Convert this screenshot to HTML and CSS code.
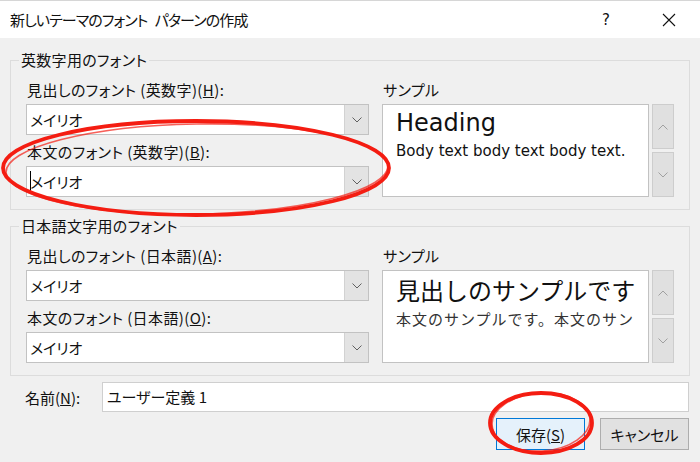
FILE: index.html
```html
<!DOCTYPE html>
<html lang="ja">

<head>
  <meta charset="UTF-8" />
  <title>新しいテーマのフォント パターンの作成</title>
  <link rel="stylesheet" href="styles.css">
</head>

<body>
  <div class="dialog">
    <div class="titlebar">
      <span class="title">新しいテーマのフォント パターンの作成</span>
      <span class="help">?</span>
      <span class="close">
        <svg width="14" height="14" viewBox="0 0 14 14"><path d="M1 1 L13 13 M13 1 L1 13" stroke="#111" stroke-width="1.1" fill="none" /></svg>
      </span>
    </div>

    <div class="content">
      <fieldset class="group">
        <legend>英数字用のフォント</legend>
        <div class="fields">
          <div class="col-left">
            <div class="label">見出しのフォント (英数字)(<u>H</u>):</div>
            <div class="combo">
              <span class="combo-text">メイリオ</span>
              <span class="drop"><svg width="10" height="6" viewBox="0 0 10 6"><path d="M0.5 0.5 L5 5 L9.5 0.5" stroke="#606060" fill="none" /></svg></span>
            </div>
            <div class="label second">本文のフォント (英数字)(<u>B</u>):</div>
            <div class="combo">
              <span class="combo-text"><span class="caret"></span>メイリオ</span>
              <span class="drop"><svg width="10" height="6" viewBox="0 0 10 6"><path d="M0.5 0.5 L5 5 L9.5 0.5" stroke="#606060" fill="none" /></svg></span>
            </div>
          </div>
          <div class="col-right">
            <div class="label">サンプル</div>
            <div class="sample-row">
              <div class="sample">
                <div class="sample-inner latin">
                  <div class="sample-head">Heading</div>
                  <div class="sample-body">Body text body text body text.</div>
                </div>
              </div>
              <div class="scroll">
                <div class="sbtn"><svg width="10" height="6" viewBox="0 0 10 6"><path d="M0.5 5.5 L5 1 L9.5 5.5" stroke="#a0a0a0" fill="none" /></svg></div>
                <div class="sbtn"><svg width="10" height="6" viewBox="0 0 10 6"><path d="M0.5 0.5 L5 5 L9.5 0.5" stroke="#a0a0a0" fill="none" /></svg></div>
              </div>
            </div>
          </div>
        </div>
      </fieldset>

      <fieldset class="group">
        <legend>日本語文字用のフォント</legend>
        <div class="fields">
          <div class="col-left">
            <div class="label">見出しのフォント (日本語)(<u>A</u>):</div>
            <div class="combo">
              <span class="combo-text">メイリオ</span>
              <span class="drop"><svg width="10" height="6" viewBox="0 0 10 6"><path d="M0.5 0.5 L5 5 L9.5 0.5" stroke="#606060" fill="none" /></svg></span>
            </div>
            <div class="label second">本文のフォント (日本語)(<u>O</u>):</div>
            <div class="combo">
              <span class="combo-text">メイリオ</span>
              <span class="drop"><svg width="10" height="6" viewBox="0 0 10 6"><path d="M0.5 0.5 L5 5 L9.5 0.5" stroke="#606060" fill="none" /></svg></span>
            </div>
          </div>
          <div class="col-right">
            <div class="label">サンプル</div>
            <div class="sample-row">
              <div class="sample">
                <div class="sample-inner">
                  <div class="sample-head jp">見出しのサンプルです</div>
                  <div class="sample-body jp">本文のサンプルです。本文のサン</div>
                </div>
              </div>
              <div class="scroll">
                <div class="sbtn"><svg width="10" height="6" viewBox="0 0 10 6"><path d="M0.5 5.5 L5 1 L9.5 5.5" stroke="#a0a0a0" fill="none" /></svg></div>
                <div class="sbtn"><svg width="10" height="6" viewBox="0 0 10 6"><path d="M0.5 0.5 L5 5 L9.5 0.5" stroke="#a0a0a0" fill="none" /></svg></div>
              </div>
            </div>
          </div>
        </div>
      </fieldset>

      <div class="name-row">
        <span class="name-label">名前(<u>N</u>):</span>
        <div class="name-input">ユーザー定義 1</div>
      </div>

      <div class="buttons">
        <button class="btn primary">保存(<u>S</u>)</button>
        <button class="btn">キャンセル</button>
      </div>
    </div>

    <!-- red hand-drawn marks on top of the dialog -->
    <svg class="marks" width="700" height="462" viewBox="0 0 700 462">
      <ellipse cx="196" cy="168" rx="193" ry="47" fill="none" stroke="#f41d12" stroke-width="3.8" />
      <ellipse cx="197" cy="169" rx="191" ry="45" fill="none" stroke="#f41d12" stroke-width="1.6" opacity="0.7" transform="rotate(-1 197 169)" />
      <ellipse cx="541" cy="423" rx="51" ry="30" fill="none" stroke="#f41d12" stroke-width="3.8" />
      <ellipse cx="541" cy="422" rx="49" ry="29" fill="none" stroke="#f41d12" stroke-width="1.6" opacity="0.7" transform="rotate(-4 541 422)" />
    </svg>
  </div>
</body>

</html>
```

FILE: styles.css
```css
:root {
  --bg: #f0f0f0;
  --line: #dcdcdc;
  --field-border: #c2c2c2;
  --text: #111111;
}

* {
  box-sizing: border-box;
}

body {
  margin: 0;
  font-family: "Noto Sans CJK JP", sans-serif;
  font-feature-settings: "palt";
  color: var(--text);
  background: var(--bg);
}

.dialog {
  position: relative;
  width: 700px;
  height: 462px;
  background: var(--bg);
  overflow: hidden;
}

.titlebar {
  display: flex;
  align-items: center;
  height: 38px;
  background: #fff;
  border-top: 1px solid #d6d6d6;
  padding-left: 10px;
  font-size: 15px;
}

.title {
  flex: 1;
  letter-spacing: -0.9px;
  word-spacing: 5px;
}

.help {
  font-family: "DejaVu Sans", sans-serif;
  font-size: 15px;
  width: 20px;
  margin-right: 46px;
  text-align: center;
}

.close {
  display: flex;
  margin-right: 24px;
}

.content {
  padding: 12px 11px 0 10px;
}

.group {
  margin: 0;
  padding: 10px 15px 12px 15px;
  border: 1px solid var(--line);
}

.group + .group {
  margin-top: 6px;
}

legend {
  margin-left: -7px;
  padding: 0 2px;
  font-size: 15px;
  line-height: 20px;
  letter-spacing: 0.3px;
}

.fields {
  display: grid;
  grid-template-columns: 343px 292px;
  column-gap: 13px;
}

.label {
  font-size: 15px;
  line-height: 20px;
  margin-bottom: 4px;
  padding-left: 1px;
  letter-spacing: 0.4px;
}

.label.second {
  margin-top: 7px;
}

.combo {
  display: flex;
  height: 31px;
  background: #fff;
  border: 1px solid var(--field-border);
}

.combo-text {
  flex: 1;
  display: flex;
  align-items: center;
  padding-left: 3px;
  font-size: 15px;
}

.caret {
  width: 1px;
  height: 22px;
  background: #000;
  margin-right: -1px;
}

.drop {
  width: 24px;
  display: flex;
  align-items: center;
  justify-content: center;
  background: #e3e3e3;
  border-left: 1px solid #d2d2d2;
}

.col-right {
  display: flex;
  flex-direction: column;
}

.sample-row {
  flex: 1;
  display: flex;
  gap: 3px;
}

.sample {
  width: 267px;
  background: #fff;
  border: 1px solid var(--field-border);
  padding: 0 10px 0 13px;
}

.sample-inner {
  overflow: hidden;
  white-space: nowrap;
}

.latin {
  font-family: "DejaVu Sans", sans-serif;
}

.sample-head {
  font-size: 24px;
  line-height: 34px;
  margin-top: 1px;
}

.sample-body {
  font-size: 15px;
  line-height: 22px;
}

.sample-head.jp {
  font-feature-settings: normal;
  line-height: 36px;
}

.sample-body.jp {
  font-feature-settings: normal;
  font-size: 15px;
  letter-spacing: 1px;
  color: #333;
}

.scroll {
  width: 22px;
  display: flex;
  flex-direction: column;
  gap: 3px;
}

.sbtn {
  flex: 1;
  display: flex;
  align-items: center;
  justify-content: center;
  background: #e0e0e0;
  border: 1px solid #cdcdcd;
}

.name-row {
  display: flex;
  align-items: center;
  margin-top: 6px;
}

.name-label {
  width: 92px;
  padding-left: 15px;
  font-size: 15px;
}

.name-input {
  flex: 1;
  height: 30px;
  line-height: 28px;
  background: #fff;
  border: 1px solid #cfcfcf;
  padding-left: 4px;
  font-size: 15px;
}

.buttons {
  display: flex;
  justify-content: flex-end;
  gap: 15px;
  margin-top: 6px;
}

.btn {
  width: 89px;
  height: 32px;
  font-family: inherit;
  font-feature-settings: "palt";
  font-size: 15px;
  color: var(--text);
  background: #e1e1e1;
  border: 1px solid #adadad;
  padding: 0;
}

.btn.primary {
  background: #e5f1fb;
  border-color: #0078d7;
}

.marks {
  position: absolute;
  left: 0;
  top: 0;
  pointer-events: none;
}
```
